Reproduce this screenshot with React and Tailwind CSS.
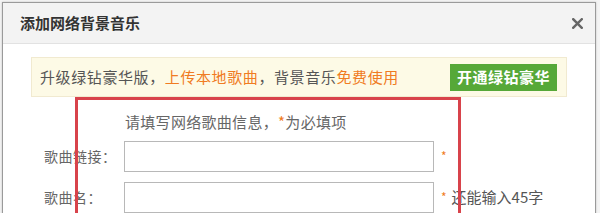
export default function App() {
  const font = { fontFamily: '"Noto Sans CJK SC", "Noto Sans", sans-serif' };

  return (
    <div className="w-[600px] h-[213px] overflow-hidden bg-[#f4f4f4] pl-[2px] pt-[2px] pr-[4px]" style={font}>
      <div className="relative h-[240px] border border-[#9a9a9a] bg-white shadow-[0_0_2px_rgba(0,0,0,0.2)]">
        {/* Header */}
        <div className="flex h-[41px] items-center justify-between border-b border-[#e2e2e2] bg-[#f3f3f3] pl-[17px] pr-[11px]">
          <h1 className="text-[15px] font-bold text-[#333]">添加网络背景音乐</h1>
          <svg width="11" height="11" viewBox="0 0 11 11" className="mr-[1px]">
            <path d="M1.2 1.2 L9.8 9.8 M9.8 1.2 L1.2 9.8" stroke="#666" strokeWidth="2.4" strokeLinecap="square" />
          </svg>
        </div>

        {/* Notice */}
        <div className="mx-[28px] mt-[13px] flex h-[40px] items-center justify-between border border-[#f1ead0] bg-[#fdfae6] pl-[8px] pr-[9px]">
          <p className="text-[15px] tracking-[0.6px] text-[#555]">
            升级绿钻豪华版，<span className="text-[#f07b22]">上传本地歌曲</span>，背景音乐<span className="text-[#f07b22]">免费使用</span>
          </p>
          <button className="h-[27px] bg-[#56a838] px-[7px] text-[15px] font-bold tracking-[0.5px] text-white">开通绿钻豪华</button>
        </div>

        {/* Form */}
        <div className="pl-[41px] pt-[14px]">
          <p className="pl-[81px] text-[15px] tracking-[0.3px] text-[#666]">
            请填写网络歌曲信息，<span className="text-[#f07b22]">*</span>为必填项
          </p>
          <div className="mt-[7px] flex items-center">
            <label className="w-[80px] text-[14px] tracking-[0.5px] text-[#666]">歌曲链接：</label>
            <input className="h-[31px] w-[310px] border border-[#b8b8b8] outline-none" />
            <span className="ml-[7px] text-[12px] text-[#f07b22]">*</span>
          </div>
          <div className="mt-[10px] flex items-center">
            <label className="w-[80px] text-[14px] tracking-[0.5px] text-[#666]">歌曲名：</label>
            <input className="h-[31px] w-[310px] border border-[#b8b8b8] outline-none" />
            <span className="ml-[7px] text-[12px] text-[#f07b22]">*</span>
            <span className="ml-[5px] text-[15px] text-[#555]">还能输入45字</span>
          </div>
        </div>

        {/* Red annotation box */}
        <div className="absolute left-[72px] top-[94px] h-[140px] w-[386px] border-[3px] border-[#d8434b]" />
      </div>
    </div>
  );
}
